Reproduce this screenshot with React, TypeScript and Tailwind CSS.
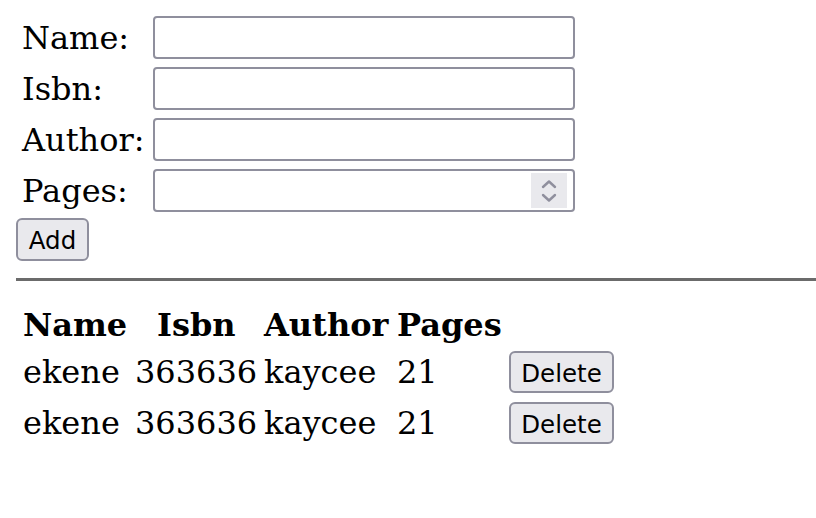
import { useState } from 'react';

interface Book {
  name: string;
  isbn: string;
  author: string;
  pages: string;
}

const FIELDS = ['Name:', 'Isbn:', 'Author:', 'Pages:'];

export default function App() {
  const [books, setBooks] = useState<Book[]>([
    { name: 'ekene', isbn: '363636', author: 'kaycee', pages: '21' },
    { name: 'ekene', isbn: '363636', author: 'kaycee', pages: '21' },
  ]);

  const remove = (i: number) => setBooks(books.filter((_, idx) => idx !== i));

  return (
    <div className="min-h-screen bg-white text-black pt-[16px] pl-[16px] font-['DejaVu_Serif',serif] text-[32px]">
      {/* Form */}
      <div className="flex flex-col gap-[8px]">
        {FIELDS.map((label, i) => (
          <div key={label} className="flex items-center h-[43px]">
            <span className="w-[137px] pl-[6px] leading-none">{label}</span>
            <div className="relative w-[422px] h-[43px] border-2 border-[#8f8f9d] rounded-[4px] bg-white">
              {i === 3 && (
                <div className="absolute right-[6px] top-[2px] w-[36px] h-[35px] bg-[#e9e9ed] flex flex-col items-center justify-center gap-[4px]">
                  <svg width="16" height="10" viewBox="0 0 16 10" fill="none">
                    <path d="M2 8L8 2.5L14 8" stroke="#8f8f9d" strokeWidth="2.4" strokeLinecap="round" strokeLinejoin="round" />
                  </svg>
                  <svg width="16" height="10" viewBox="0 0 16 10" fill="none">
                    <path d="M2 2L8 7.5L14 2" stroke="#8f8f9d" strokeWidth="2.4" strokeLinecap="round" strokeLinejoin="round" />
                  </svg>
                </div>
              )}
            </div>
          </div>
        ))}
      </div>
      <button className="mt-[6px] w-[73px] h-[43px] pt-[3px] border-2 border-[#8f8f9d] rounded-[6px] bg-[#e9e9ed] font-['DejaVu_Sans',sans-serif] text-[24.5px] leading-none">
        Add
      </button>

      <div className="mt-[16px] h-[3px] bg-[#6b6b6b]" />

      {/* Table */}
      <div className="mt-[22px] pl-[7px]">
        <div className="flex items-center h-[44px] font-bold">
          <span className="w-[134px]">Name</span>
          <span className="w-[107px]">Isbn</span>
          <span className="w-[133px]">Author</span>
          <span>Pages</span>
        </div>
        {books.map((b, i) => (
          <div key={i} className="flex items-center h-[51px]">
            <span className="w-[112px]">{b.name}</span>
            <span className="w-[129px]">{b.isbn}</span>
            <span className="w-[133px]">{b.author}</span>
            <span className="w-[112px]">{b.pages}</span>
            <button
              onClick={() => remove(i)}
              className="w-[105px] h-[42px] pt-[3px] border-2 border-[#8f8f9d] rounded-[6px] bg-[#e9e9ed] font-['DejaVu_Sans',sans-serif] text-[24.5px] leading-none"
            >
              Delete
            </button>
          </div>
        ))}
      </div>
    </div>
  );
}
